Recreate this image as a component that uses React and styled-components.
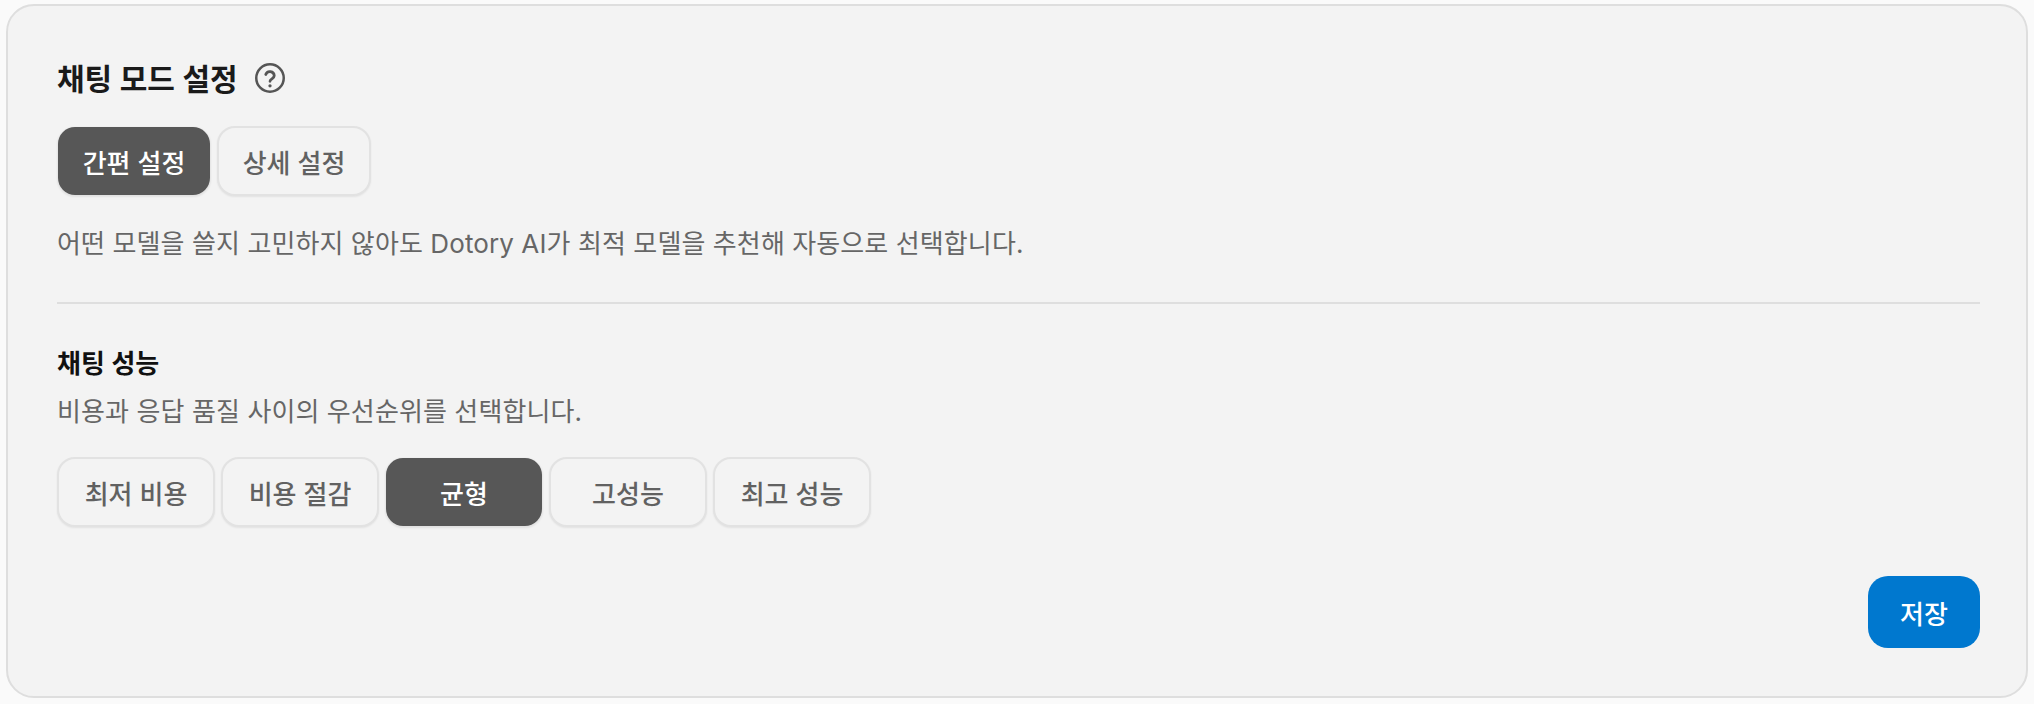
import React from 'react'
import styled, { createGlobalStyle } from 'styled-components'

const GlobalStyle = createGlobalStyle`
  html, body {
    margin: 0;
    padding: 0;
    background: #fafafa;
  }
  body {
    font-family: "Inter", "Noto Sans CJK KR", sans-serif;
  }
`

const Page = styled.div`
  width: 2034px;
  height: 704px;
  padding: 4px 6px 6px;
  box-sizing: border-box;
`

const Card = styled.section`
  height: 100%;
  box-sizing: border-box;
  padding: 0 46px 0 49px;
  background: #f3f3f3;
  border: 2px solid #dedede;
  border-radius: 28px;
  display: flex;
  flex-direction: column;
`

const TitleRow = styled.div`
  display: flex;
  align-items: center;
  gap: 17px;
  height: 40px;
  margin-top: 51px;
`

const Title = styled.h2`
  margin: 0;
  font-size: 30px;
  font-weight: 600;
  color: #1a1a1a;
`

const HelpIcon = styled.svg`
  width: 30px;
  height: 30px;
  margin-top: 2px;
  color: #555;
`

const ButtonRow = styled.div`
  display: flex;
  gap: 6px;
  margin-top: ${p => p.$top}px;
`

const Choice = styled.button`
  box-sizing: border-box;
  width: ${p => p.$width}px;
  height: 70px;
  padding: 0;
  border-radius: 18px;
  font-family: inherit;
  font-size: 26px;
  font-weight: 500;
  color: ${p => (p.$active ? '#fff' : '#616161')};
  background: ${p => (p.$active ? '#575757' : '#f3f3f3')};
  background-clip: padding-box;
  border: ${p => (p.$active ? '1px solid transparent' : '2px solid #e2e2e2')};
  box-shadow: 0 1px 2px rgba(0, 0, 0, 0.07);
`

const Description = styled.p`
  margin: ${p => p.$top}px 0 0;
  font-size: 26px;
  line-height: 36px;
  letter-spacing: 0.1px;
  color: #666;
`

const Divider = styled.hr`
  width: 100%;
  margin: 40px 0 0;
  border: 0;
  border-top: 2px solid #dedede;
`

const SectionTitle = styled.h3`
  margin: 42px 0 0;
  font-size: 26px;
  line-height: 36px;
  font-weight: 600;
  color: #111;
`

const Footer = styled.div`
  display: flex;
  justify-content: flex-end;
  margin-top: 49px;
`

const SaveButton = styled.button`
  width: 112px;
  height: 72px;
  padding: 0;
  border: 0;
  border-radius: 20px;
  font-family: inherit;
  font-size: 26px;
  font-weight: 500;
  color: #fff;
  background: #0078cf;
`

const modes = [
  { label: '간편 설정', active: true },
  { label: '상세 설정' },
]

const levels = [
  { label: '최저 비용' },
  { label: '비용 절감' },
  { label: '균형', active: true },
  { label: '고성능' },
  { label: '최고 성능' },
]

const App = () => {
  return (
    <Page>
      <GlobalStyle />
      <Card>
        <TitleRow>
          <Title>채팅 모드 설정</Title>
          <HelpIcon viewBox="0 0 24 24" fill="none" stroke="currentColor" strokeWidth="2" strokeLinecap="round" strokeLinejoin="round">
            <circle cx="12" cy="12" r="11" />
            <path d="M8.6 9.2a3.5 3.5 0 0 1 6.8 1c0 2.2-3.4 2.6-3.4 4.4" strokeWidth="2.2" />
            <path d="M12 18.2h.01" strokeWidth="2.6" />
          </HelpIcon>
        </TitleRow>
        <ButtonRow $top={29}>
          {modes.map(item => (
            <Choice key={item.label} $width={154} $active={item.active}>{item.label}</Choice>
          ))}
        </ButtonRow>
        <Description $top={30}>어떤 모델을 쓸지 고민하지 않아도 Dotory AI가 최적 모델을 추천해 자동으로 선택합니다.</Description>
        <Divider />
        <SectionTitle>채팅 성능</SectionTitle>
        <Description $top={12}>비용과 응답 품질 사이의 우선순위를 선택합니다.</Description>
        <ButtonRow $top={27}>
          {levels.map(item => (
            <Choice key={item.label} $width={158} $active={item.active}>{item.label}</Choice>
          ))}
        </ButtonRow>
        <Footer>
          <SaveButton>저장</SaveButton>
        </Footer>
      </Card>
    </Page>
  )
}

export default App
